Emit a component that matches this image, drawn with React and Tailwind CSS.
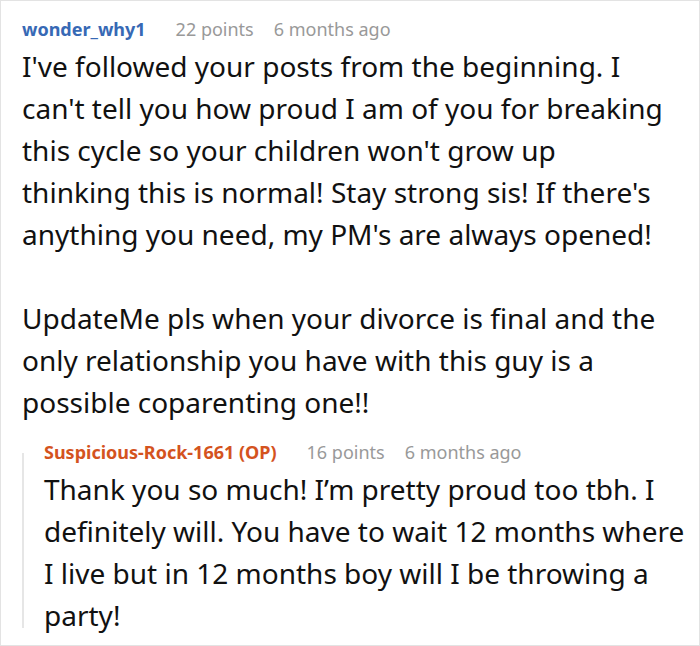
import React from 'react';

const Header = ({ author, authorClass, points, time }) => (
    <div className="flex items-baseline text-[18px] leading-[24px]">
        <span className={`font-bold ${authorClass}`}>{author}</span>
        <span className="ml-[30px] text-[#999999]">{points} points</span>
        <span className="ml-5 text-[#999999]">{time}</span>
    </div>
);

// each entry is one visual line, as wrapped in the original thread
const Lines = ({ lines }) =>
    lines.map((line, i) => (
        <React.Fragment key={i}>
            {line}
            {i < lines.length - 1 && <br />}
        </React.Fragment>
    ));

export default function App() {
    return (
        <div
            className="w-[700px] h-[646px] bg-white border border-[#e3e3e3] pl-[21px] pr-[8px] pt-[16px] overflow-hidden"
            style={{ fontFamily: '"Noto Sans", "Open Sans", sans-serif' }}
        >
            {/* Parent comment */}
            <Header author="wonder_why1" authorClass="text-[#3769b5]" points={22} time="6 months ago" />
            <div className="mt-[4px] text-[28px] leading-[42px] text-[#111111] whitespace-nowrap">
                <p>
                    <Lines
                        lines={[
                            "I've followed your posts from the beginning. I",
                            "can't tell you how proud I am of you for breaking",
                            "this cycle so your children won't grow up",
                            "thinking this is normal! Stay strong sis! If there's",
                            "anything you need, my PM's are always opened!",
                        ]}
                    />
                </p>
                <p className="mt-[42px]">
                    <Lines
                        lines={[
                            'UpdateMe pls when your divorce is final and the',
                            'only relationship you have with this guy is a',
                            'possible coparenting one!!',
                        ]}
                    />
                </p>
            </div>

            {/* OP reply */}
            <div className="mt-[17px] flex">
                <div className="w-[2px] shrink-0 bg-[#e6e6e6] mt-[13px] mb-[8px]" />
                <div className="pl-[20px]">
                    <Header
                        author="Suspicious-Rock-1661 (OP)"
                        authorClass="text-[#d4531e]"
                        points={16}
                        time="6 months ago"
                    />
                    <p className="mt-[4px] text-[28px] leading-[42px] text-[#111111] whitespace-nowrap">
                        <Lines
                            lines={[
                                'Thank you so much! I’m pretty proud too tbh. I',
                                'definitely will. You have to wait 12 months where',
                                'I live but in 12 months boy will I be throwing a',
                                'party!',
                            ]}
                        />
                    </p>
                </div>
            </div>
        </div>
    );
}
